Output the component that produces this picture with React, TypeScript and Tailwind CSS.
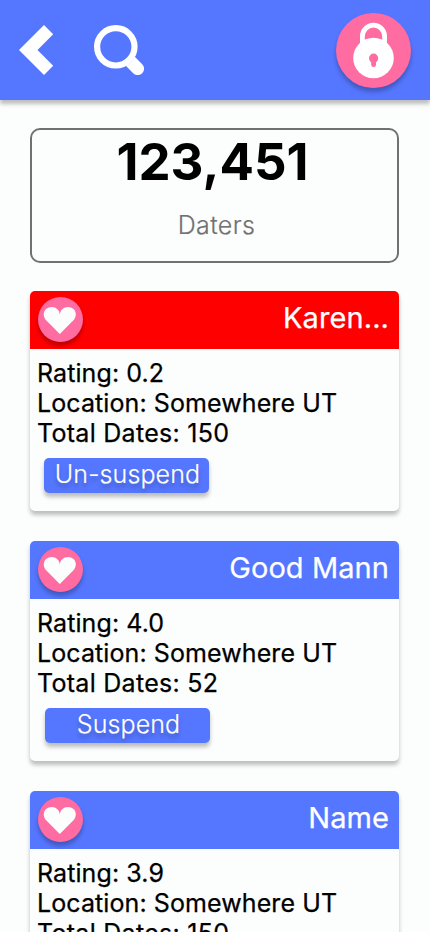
import React from "react";

type Dater = {
  name: string;
  rating: string;
  location: string;
  dates: number;
  suspended: boolean;
};

const daters: Dater[] = [
  { name: "Karen...", rating: "0.2", location: "Somewhere UT", dates: 150, suspended: true },
  { name: "Good Mann", rating: "4.0", location: "Somewhere UT", dates: 52, suspended: false },
  { name: "Name", rating: "3.9", location: "Somewhere UT", dates: 150, suspended: false },
];

function Header() {
  return (
    <header className="flex h-[100px] shrink-0 items-start bg-[#5576ff] shadow-[0_4px_4px_rgba(0,0,0,0.25)]">
      <button aria-label="Back" className="mt-[25px] ml-[19px]">
        <svg className="block" width="35" height="50" viewBox="0 0 35 50" fill="white">
          <path d="M25 0L34.2 9.2L18.5 25L34.2 40.8L25 50L0 25Z" />
        </svg>
      </button>
      <button aria-label="Search" className="mt-[25px] ml-[40px]">
        <svg className="block" width="50" height="50" viewBox="0 0 50 50" fill="none">
          <circle cx="21.8" cy="21.8" r="18.7" stroke="white" strokeWidth="6.2" />
          <path d="M40.8 31.8L48.2 39.2A6.3 6.3 0 0 1 39.2 48.2L31.8 40.8Q38 37.5 40.8 31.8Z" fill="white" />
        </svg>
      </button>
      <button
        aria-label="Lock"
        className="mt-[13px] mr-[19px] ml-auto size-[75px] rounded-full bg-[#ff6ca2] shadow-[0_4px_4px_rgba(0,0,0,0.25)]"
      >
        <svg className="block" width="75" height="75" viewBox="0 0 75 75" fill="none">
          <path d="M26.4 32V23.3a11.1 11.1 0 0 1 22.2 0V32" stroke="white" strokeWidth="4.8" />
          <circle cx="37.5" cy="45" r="20.3" fill="white" />
          <circle cx="37.6" cy="45.2" r="4.6" fill="#ff6ca2" />
          <path d="M37.6 46v5.7" stroke="#ff6ca2" strokeWidth="4.8" strokeLinecap="round" />
        </svg>
      </button>
    </header>
  );
}

function HeartBadge() {
  return (
    <div className="size-[45px] rounded-full bg-[#ff6ca2] shadow-[0_4px_4px_rgba(0,0,0,0.25)]">
      <svg className="block" width="45" height="45" viewBox="0 0 45 45" fill="#fcfefd">
        <path d="M21.8 37L8.4 23.6C4.8 19.9 5.1 14.7 8.1 12C11.7 8.7 17.5 9.4 20.4 13.2Q21.6 14.9 21.8 17.5Q22 14.9 23.2 13.2C26.1 9.4 31.9 8.7 35.5 12C38.5 14.7 38.8 19.9 35.2 23.6Z" />
      </svg>
    </div>
  );
}

function DaterCard({ dater }: { dater: Dater }) {
  return (
    <article className="h-[220px] shrink-0 rounded-[5px] bg-[#fcfefd] shadow-[0_4px_4px_rgba(0,0,0,0.25)]">
      <div
        className={`flex h-[58px] items-start justify-between rounded-t-[5px] pt-[6px] pr-[10px] pl-[8px] ${
          dater.suspended ? "bg-[#ff0000]" : "bg-[#5576ff]"
        }`}
      >
        <HeartBadge />
        <h2 className="mt-[3px] text-[29px] leading-[36px] tracking-[0.08px] text-white [-webkit-text-stroke:0.25px_white]">
          {dater.name}
        </h2>
      </div>
      <div className="pt-[9px] pl-[7px] text-[25px] leading-[30px] text-black">
        <div className="tracking-[0.09px] [-webkit-text-stroke:0.25px_black]">
          <p>Rating: {dater.rating}</p>
          <p>Location: {dater.location}</p>
          <p className="tracking-[0.28px]">Total Dates: {dater.dates}</p>
        </div>
        <button
          className={`mt-[10px] block h-[35px] w-[165px] rounded-[5px] bg-[#5576ff] pb-[2px] pl-[2px] text-[25px] leading-[33px] font-light tracking-[0.1px] text-white shadow-[0_4px_4px_rgba(0,0,0,0.25)] [-webkit-text-stroke:0.2px_white] [text-shadow:0_4px_4px_rgba(0,0,0,0.25)] ${
            dater.suspended ? "ml-[7px]" : "ml-[8px]"
          }`}
        >
          {dater.suspended ? "Un-suspend" : "Suspend"}
        </button>
      </div>
    </article>
  );
}

export default function App() {
  return (
    <div className="flex h-[932px] w-[430px] flex-col overflow-hidden bg-[#fcfefd] font-['Inter',sans-serif]">
      <Header />
      <main className="flex flex-col pt-[28px] pr-[31px] pl-[30px]">
        <section className="h-[135px] shrink-0 rounded-[10px] border-2 border-[#717171] text-center">
          <p className="pr-[4px] text-[51px] leading-[64px] font-bold text-black">123,451</p>
          <p className="mt-[16px] pl-[4px] text-[25px] leading-[30px] font-light tracking-[0.4px] text-[#717171] [-webkit-text-stroke:0.2px_#717171]">
            Daters
          </p>
        </section>
        <div className="mt-[28px] flex flex-col gap-[30px]">
          {daters.map((dater) => (
            <DaterCard key={dater.name} dater={dater} />
          ))}
        </div>
      </main>
    </div>
  );
}
